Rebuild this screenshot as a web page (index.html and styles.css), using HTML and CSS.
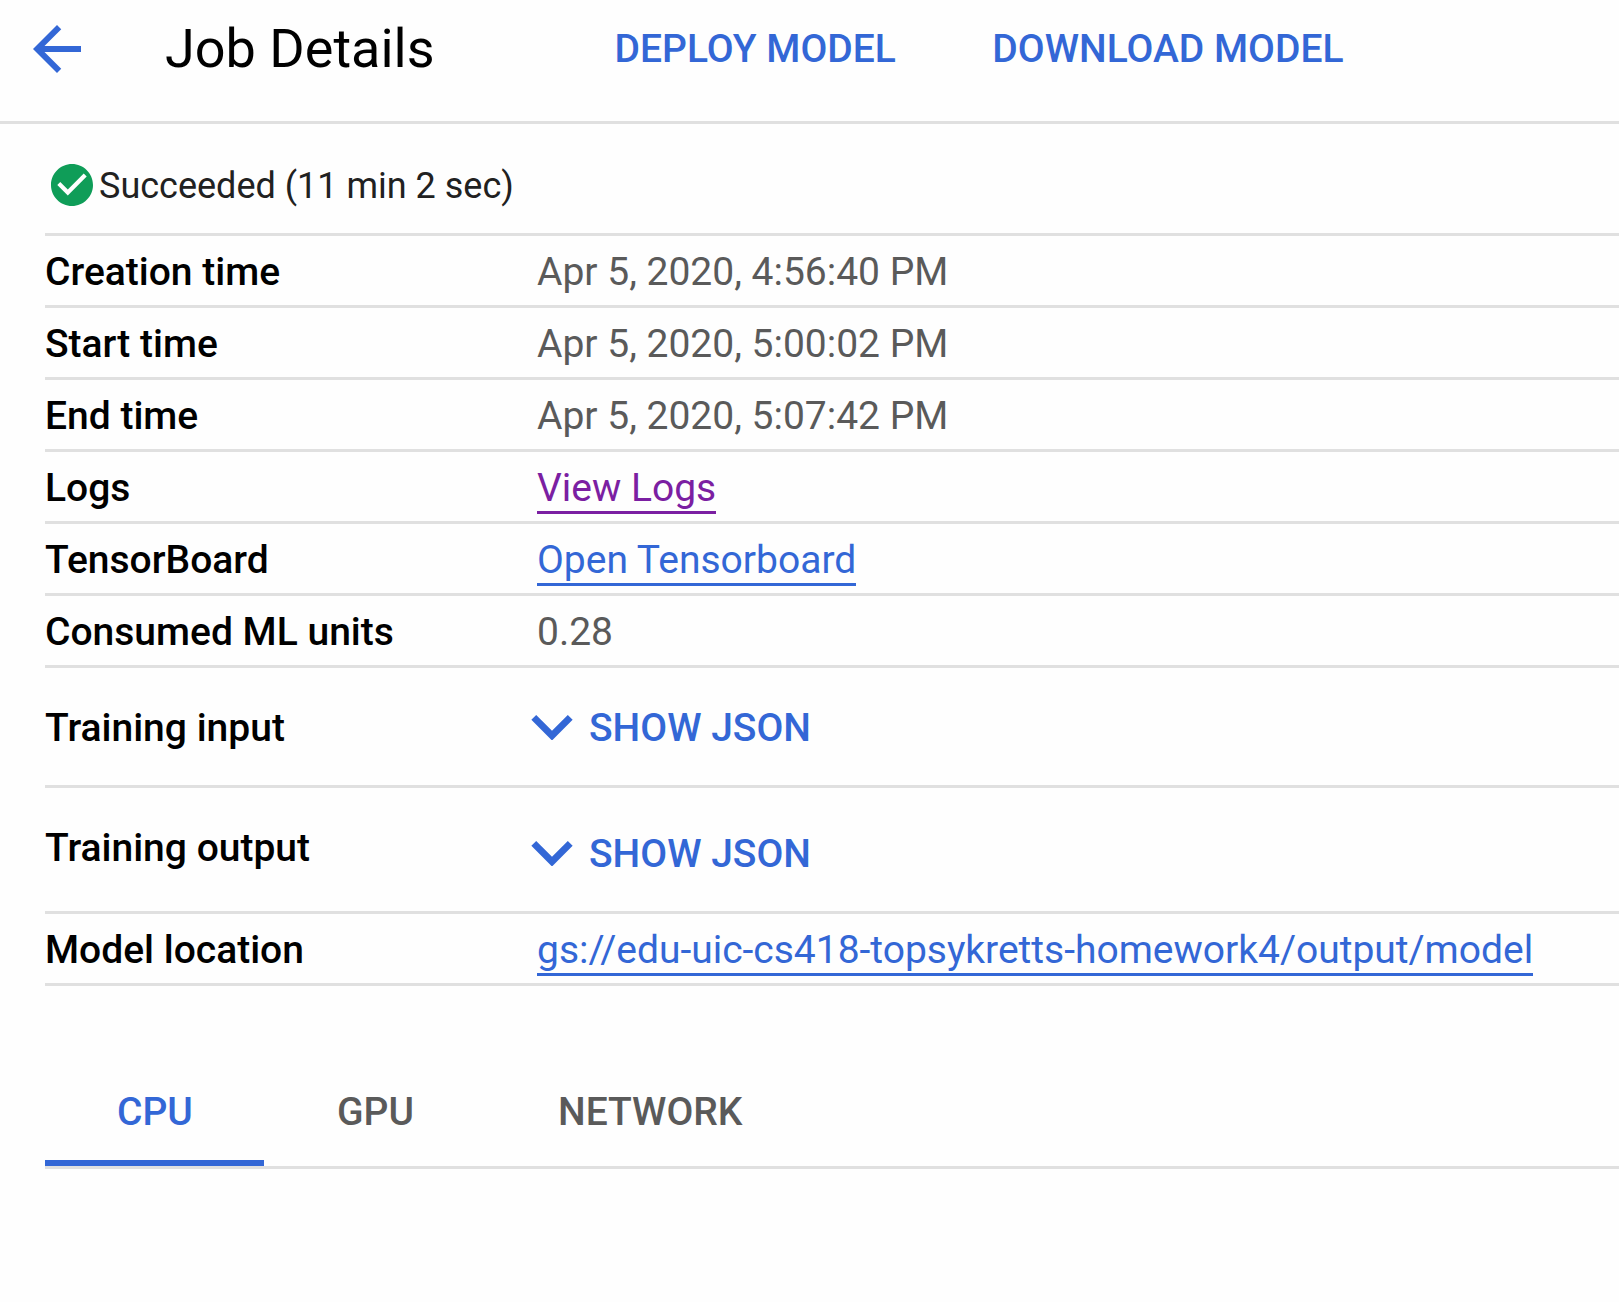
FILE: index.html
```html
<!DOCTYPE html>
<html lang="en">
<head>
<meta charset="utf-8">
<title>Job Details</title>
<link rel="stylesheet" href="styles.css">
</head>
<body>
<header class="topbar">
  <a class="back" aria-label="Back"><svg viewBox="0 0 24 24"><path d="M20 11H7.83l5.59-5.59L12 4l-8 8 8 8 1.41-1.41L7.83 13H20v-2z"/></svg></a>
  <h1 class="title">Job Details</h1>
  <nav class="actions">
    <a class="action">DEPLOY MODEL</a>
    <a class="action">DOWNLOAD MODEL</a>
  </nav>
</header>
<main class="content">
  <div class="status">
    <svg class="status-icon" viewBox="2 2 20 20"><path d="M12 2C6.48 2 2 6.48 2 12s4.48 10 10 10 10-4.48 10-10S17.52 2 12 2zm-2 15l-5-5 1.41-1.41L10 14.17l7.59-7.59L19 8l-9 9z"/></svg>
    <span>Succeeded (11 min 2 sec)</span>
  </div>
  <dl class="details">
    <div class="row"><dt>Creation time</dt><dd>Apr 5, 2020, 4:56:40 PM</dd></div>
    <div class="row"><dt>Start time</dt><dd>Apr 5, 2020, 5:00:02 PM</dd></div>
    <div class="row"><dt>End time</dt><dd>Apr 5, 2020, 5:07:42 PM</dd></div>
    <div class="row"><dt>Logs</dt><dd><a class="link visited">View Logs</a></dd></div>
    <div class="row"><dt>TensorBoard</dt><dd><a class="link">Open Tensorboard</a></dd></div>
    <div class="row"><dt>Consumed ML units</dt><dd>0.28</dd></div>
    <div class="row json-input"><dt>Training input</dt><dd class="toggle"><svg class="chevron" viewBox="6 8.59 12 7.41"><path d="M16.59 8.59L12 13.17 7.41 8.59 6 10l6 6 6-6z"/></svg><span>SHOW JSON</span></dd></div>
    <div class="row json-output"><dt>Training output</dt><dd class="toggle"><svg class="chevron" viewBox="6 8.59 12 7.41"><path d="M16.59 8.59L12 13.17 7.41 8.59 6 10l6 6 6-6z"/></svg><span>SHOW JSON</span></dd></div>
    <div class="row"><dt>Model location</dt><dd><a class="link path">gs://edu-uic-cs418-topsykretts-homework4/output/model</a></dd></div>
  </dl>
  <div class="tabs">
    <div class="tab active">CPU</div>
    <div class="tab">GPU</div>
    <div class="tab">NETWORK</div>
  </div>
</main>
</body>
</html>
```
FILE: styles.css
```css
* { box-sizing: border-box; }
body {
  margin: 0;
  height: 1302px;
  overflow: hidden;
  background: #fefefe;
  color: #000;
  font: 400 39px/60px Roboto, sans-serif;
  white-space: nowrap;
}
svg { display: block; flex: none; }
.topbar {
  display: flex;
  align-items: flex-start;
  height: 124px;
  padding-left: 21px;
  border-bottom: 3px solid #e0e0e0;
}
.back { width: 72px; margin: 13px 72px 0 0; }
.back svg { width: 72px; height: 72px; fill: #3367d6; }
.title {
  width: 449.5px;
  margin: 19px 0 0;
  font-size: 54px;
  font-weight: 400;
  line-height: 60px;
}
.actions { display: flex; gap: 96.5px; padding-top: 19px; }
.action { color: #3367d6; font-weight: 500; }
.content { padding-left: 45px; }
.status {
  display: flex;
  align-items: flex-start;
  height: 112px;
  padding: 40px 0 0 6px;
  border-bottom: 3px solid #e0e0e0;
  font-size: 36px;
  line-height: 42px;
  color: #212121;
}
.status-icon { width: 42px; height: 42px; margin-right: 6px; fill: #0f9d58; }
.status span { padding-top: 1px; }
.details { margin: 0; }
.row {
  display: grid;
  grid-template-columns: 492px 1fr;
  height: 72px;
  padding-top: 6px;
  border-bottom: 3px solid #e0e0e0;
}
dt { font-weight: 500; }
dd { margin: 0; color: #5a5a5a; }
.link { color: #3367d6; border-bottom: 3px solid; }
.visited { color: #7b1fa2; }
.path { letter-spacing: -0.015px; }
.json-input { height: 120px; padding-top: 30px; }
.json-output { height: 126px; padding-top: 30px; }
.toggle { display: flex; margin-left: -6px; color: #3367d6; font-weight: 500; }
.chevron { width: 42px; height: 25.5px; margin: 16.5px 16px 0 0; fill: #3367d6; }
.json-output .toggle { padding-top: 6px; }
.tabs {
  display: flex;
  height: 108px;
  margin-top: 75px;
  border-bottom: 3px solid #e0e0e0;
}
.tab {
  height: 105px;
  padding: 21px 72px 0;
  font-weight: 500;
  color: #5a5a5a;
}
.active { width: 219px; margin-right: 1px; color: #3367d6; border-bottom: 6px solid; }
```
